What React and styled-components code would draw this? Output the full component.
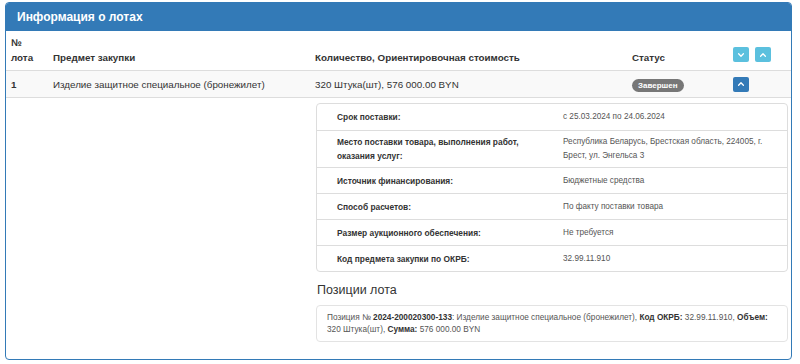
import styled, { createGlobalStyle } from 'styled-components'

const GlobalStyle = createGlobalStyle`
  body {
    margin: 0;
    background: #fff;
    font-family: "Liberation Sans", Arial, sans-serif;
    color: #333;
  }
`

const Panel = styled.div`
  margin: 2px 8px 3px 5px;
  border: 1px solid #337ab7;
  border-radius: 4px;
  overflow: hidden;
  height: 358px;
  box-sizing: border-box;
`

const PanelHeading = styled.div`
  background: #337ab7;
  color: #fff;
  font-size: 12px;
  font-weight: bold;
  height: 28px;
  display: flex;
  align-items: center;
  padding-left: 11px;
`

const Row = styled.div`
  display: grid;
  grid-template-columns: 42px 262px 317px 101px 1fr;
  padding-left: 5px;
  align-items: ${(p) => (p.$head ? 'end' : 'center')};
  min-height: ${(p) => p.$height}px;
  box-sizing: border-box;
  background: ${(p) => (p.$striped ? '#f9f9f9' : '#fff')};
  border-bottom: ${(p) => (p.$border ? '1px solid #ddd' : 'none')};
  font-size: 9.8px;
  font-weight: ${(p) => (p.$head ? 'bold' : 'normal')};
  padding-bottom: ${(p) => (p.$head ? '5px' : '0')};
`

const Cell = styled.div`
  line-height: 15px;
  font-weight: ${(p) => (p.$bold ? 'bold' : 'inherit')};
`

const Buttons = styled.div`
  display: flex;
  gap: 6px;
  padding-bottom: ${(p) => (p.$head ? '3px' : '0')};
`

const IconButton = styled.span`
  width: 16px;
  height: 15px;
  border-radius: 2px;
  background: ${(p) => (p.$dark ? '#337ab7' : '#5bc0de')};
  display: inline-flex;
  align-items: center;
  justify-content: center;
`

const Badge = styled.span`
  display: inline-block;
  background: #777;
  color: #fff;
  font-size: 8px;
  font-weight: bold;
  padding: 2px 6px 1px;
  border-radius: 7px;
  line-height: 10px;
`

const Detail = styled.div`
  padding: 5px 3px 0 310px;
`

const Card = styled.div`
  border: 1px solid #ddd;
  border-radius: 4px;
`

const CardRow = styled.div`
  display: grid;
  grid-template-columns: 246px 1fr;
  align-items: center;
  min-height: 26px;
  padding: 4px 0;
  box-sizing: border-box;
  border-top: ${(p) => (p.$first ? 'none' : '1px solid #ddd')};
  line-height: 14px;
`

const Label = styled.div`
  font-weight: bold;
  font-size: 8.4px;
  padding-left: 20px;
  padding-right: 10px;
  color: #333;
`

const Value = styled.div`
  color: #555;
  font-size: 8.2px;
  padding-right: 10px;
`

const Heading = styled.h3`
  font-size: 12.5px;
  font-weight: normal;
  margin: 10px 0 7px 1px;
  line-height: 16px;
  color: #333;
`

const Well = styled.div`
  border: 1px solid #e3e3e3;
  border-radius: 4px;
  padding: 6px 10px 6px 10px;
  font-size: 8.25px;
  line-height: 11.5px;
  color: #555;

  b {
    color: #333;
  }
`

const Chevron = ({ up }) => (
  <svg width="8" height="8" viewBox="0 0 10 10">
    <path
      d={up ? 'M2 6.5 L5 3.5 L8 6.5' : 'M2 3.5 L5 6.5 L8 3.5'}
      fill="none"
      stroke="#fff"
      strokeWidth="1.6"
      strokeLinecap="round"
      strokeLinejoin="round"
    />
  </svg>
)

const details = [
  ['Срок поставки:', 'с 25.03.2024 по 24.06.2024'],
  [
    'Место поставки товара, выполнения работ, оказания услуг:',
    'Республика Беларусь, Брестская область, 224005, г. Брест, ул. Энгельса 3'
  ],
  ['Источник финансирования:', 'Бюджетные средства'],
  ['Способ расчетов:', 'По факту поставки товара'],
  ['Размер аукционного обеспечения:', 'Не требуется'],
  ['Код предмета закупки по ОКРБ:', '32.99.11.910']
]

export default function App() {
  return (
    <>
      <GlobalStyle />
      <Panel>
        <PanelHeading>Информация о лотах</PanelHeading>
        <Row $head $border $height={40}>
          <Cell>
            №
            <br />
            лота
          </Cell>
          <Cell>Предмет закупки</Cell>
          <Cell>Количество, Ориентировочная стоимость</Cell>
          <Cell>Статус</Cell>
          <Buttons $head>
            <IconButton>
              <Chevron />
            </IconButton>
            <IconButton>
              <Chevron up />
            </IconButton>
          </Buttons>
        </Row>
        <Row $striped $border $height={27}>
          <Cell $bold>1</Cell>
          <Cell>Изделие защитное специальное (бронежилет)</Cell>
          <Cell>320 Штука(шт), 576 000.00 BYN</Cell>
          <Cell>
            <Badge>Завершен</Badge>
          </Cell>
          <Buttons>
            <IconButton $dark>
              <Chevron up />
            </IconButton>
          </Buttons>
        </Row>
        <Detail>
          <Card>
            {details.map(([label, value], i) => (
              <CardRow key={label} $first={i === 0}>
                <Label>{label}</Label>
                <Value>{value}</Value>
              </CardRow>
            ))}
          </Card>
          <Heading>Позиции лота</Heading>
          <Well>
            Позиция № <b>2024-200020300-133</b>: Изделие защитное специальное
            (бронежилет), <b>Код ОКРБ:</b> 32.99.11.910, <b>Объем:</b> 320
            Штука(шт), <b>Сумма:</b> 576 000.00 BYN
          </Well>
        </Detail>
      </Panel>
    </>
  )
}
